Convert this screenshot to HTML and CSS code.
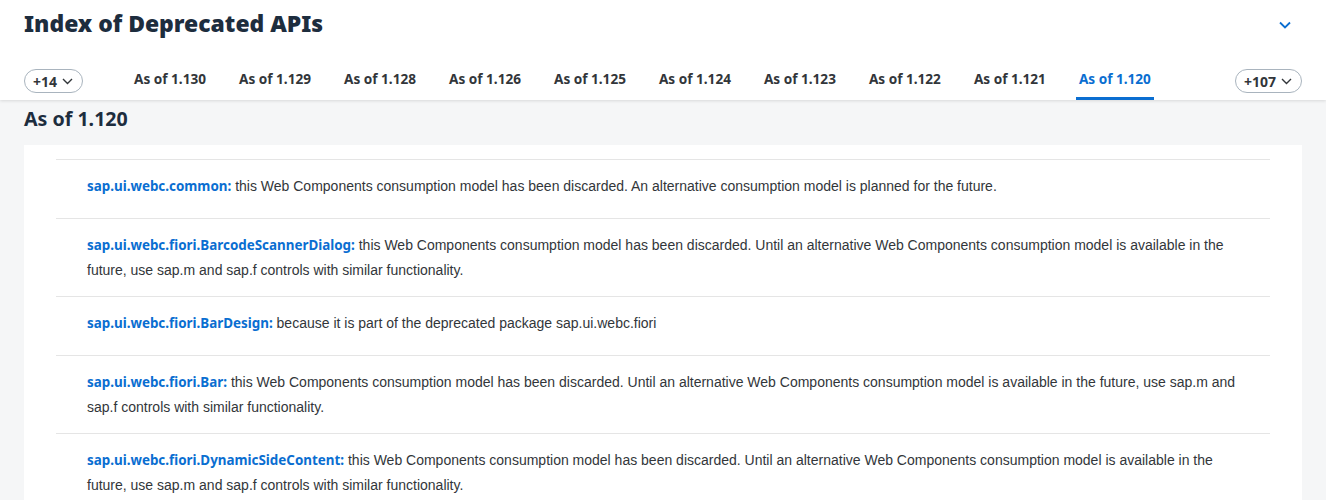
FILE: index.html
```html
<!DOCTYPE html>
<html>
<head>
<meta charset="utf-8">
<link rel="stylesheet" href="styles.css">
</head>
<body>
<header class="header">
  <div class="title-row">
    <h1 class="title">Index of Deprecated APIs</h1>
    <span class="collapse">
      <svg width="14" height="10" viewBox="0 0 14 10"><path d="M2 2.5 L7 7.5 L12 2.5" fill="none" stroke="#0a6ed1" stroke-width="1.8"/></svg>
    </span>
  </div>
  <nav class="tabs">
    <button class="overflow">+14 <svg width="11" height="7" viewBox="0 0 11 7"><path d="M1 1 L5.5 5.5 L10 1" fill="none" stroke="#32363a" stroke-width="1.4"/></svg></button>
    <div class="tab-list">
      <span class="tab">As of 1.130</span>
      <span class="tab">As of 1.129</span>
      <span class="tab">As of 1.128</span>
      <span class="tab">As of 1.126</span>
      <span class="tab">As of 1.125</span>
      <span class="tab">As of 1.124</span>
      <span class="tab">As of 1.123</span>
      <span class="tab">As of 1.122</span>
      <span class="tab">As of 1.121</span>
      <span class="tab active">As of 1.120</span>
    </div>
    <button class="overflow">+107 <svg width="11" height="7" viewBox="0 0 11 7"><path d="M1 1 L5.5 5.5 L10 1" fill="none" stroke="#32363a" stroke-width="1.4"/></svg></button>
  </nav>
</header>
<main class="content">
  <h2 class="section-title">As of 1.120</h2>
  <div class="card">
    <div class="row"><p><a class="api">sap.ui.webc.common:</a> this Web Components consumption model has been discarded. An alternative consumption model is planned for the future.</p></div>
    <div class="row"><p><a class="api">sap.ui.webc.fiori.BarcodeScannerDialog:</a> this Web Components consumption model has been discarded. Until an alternative Web Components consumption model is available in the future, use sap.m and sap.f controls with similar functionality.</p></div>
    <div class="row"><p><a class="api">sap.ui.webc.fiori.BarDesign:</a> because it is part of the deprecated package sap.ui.webc.fiori</p></div>
    <div class="row"><p><a class="api">sap.ui.webc.fiori.Bar:</a> this Web Components consumption model has been discarded. Until an alternative Web Components consumption model is available in the future, use sap.m and sap.f controls with similar functionality.</p></div>
    <div class="row"><p><a class="api">sap.ui.webc.fiori.DynamicSideContent:</a> this Web Components consumption model has been discarded. Until an alternative Web Components consumption model is available in the future, use sap.m and sap.f controls with similar functionality.</p></div>
  </div>
</main>
</body>
</html>
```
FILE: styles.css
```css
* { box-sizing: border-box; }
html, body { margin: 0; padding: 0; }
body {
  background: #f5f6f7;
  font-family: "Noto Sans", "Liberation Sans", sans-serif;
  color: #32363a;
  overflow: hidden;
  height: 500px;
}
.header {
  background: #fff;
  box-shadow: 0 1px 3px rgba(0,0,0,0.12);
  position: relative;
  z-index: 1;
}
.title-row {
  display: flex;
  justify-content: space-between;
  align-items: flex-start;
  padding: 8px 34px 0 24px;
  height: 58px;
}
.title {
  margin: 0;
  font-family: "Noto Sans", sans-serif;
  font-weight: 900;
  font-size: 22.9px;
  line-height: 32px;
  color: #1d2d3e;
}
.collapse { padding-top: 12px; display: flex; }
.tabs {
  display: flex;
  align-items: center;
  justify-content: space-between;
  padding: 0 24px;
  height: 42px;
}
.overflow {
  display: flex;
  align-items: center;
  gap: 5px;
  height: 24px;
  padding: 0 9px 0 8px;
  border: 1px solid #a9b4be;
  border-radius: 12px;
  background: #fff;
  font-family: "Noto Sans", sans-serif;
  font-weight: 700;
  font-size: 14px;
  color: #32363a;
  margin-top: 4px;
}
.tab-list {
  display: flex;
  gap: 27px;
  height: 100%;
  margin-left: 48px;
  margin-right: auto;
}
.tab {
  display: flex;
  align-items: center;
  height: 100%;
  padding: 2px 3px 0;
  font-weight: 700;
  font-size: 13.6px;
  color: #32363a;
  border-bottom: 3px solid transparent;
  white-space: nowrap;
}
.tab.active {
  color: #0a6ed1;
  border-bottom-color: #0a6ed1;
}
.content {
  padding: 0 24px;
}
.section-title {
  margin: 0;
  padding: 6px 0 0;
  height: 45px;
  font-size: 19.6px;
  font-weight: 700;
  line-height: 26px;
  color: #1d2d3e;
}
.card {
  background: #fff;
  padding: 14px 32px 0;
}
.row {
  border-top: 1px solid #e5e5e5;
  padding: 14px 31px 13px 31px;
  min-height: 59px;
}
.row p {
  margin: 0;
  font-family: "Liberation Sans", sans-serif;
  font-size: 14px;
  line-height: 25px;
  color: #32363a;
}
.api {
  color: #0a6ed1;
  font-weight: 700;
  font-family: "Noto Sans", sans-serif;
  font-size: 13.4px;
}
```
